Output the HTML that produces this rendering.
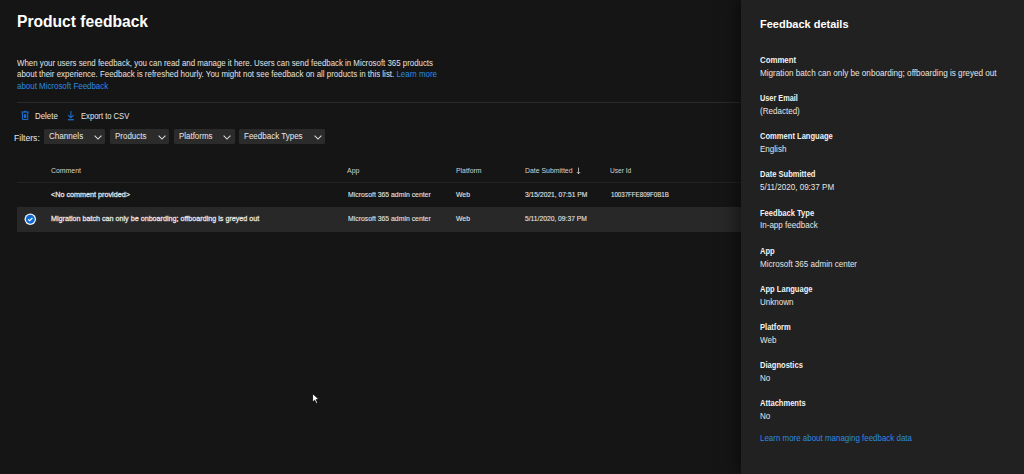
<!DOCTYPE html>
<html><head><meta charset="utf-8">
<style>
html,body{margin:0;padding:0;width:1024px;height:474px;overflow:hidden;background:#151515;font-family:"Liberation Sans",sans-serif;position:relative;}
.t{position:absolute;white-space:nowrap;line-height:1;transform-origin:0 0;}
.sep{position:absolute;height:1px;background:#2a2a2a;}
.dd{position:absolute;top:129.2px;height:14.7px;background:#2b2b2b;border-radius:1.5px;}
#panel{position:absolute;left:741px;top:0;width:283px;height:474px;background:#212121;box-shadow:-4px 0 16px rgba(0,0,0,0.5);}
</style></head>
<body>
<div class="sep" style="left:17px;top:102px;width:724px;"></div>
<div class="dd" style="left:44.2px;width:61.1px"><svg width="8" height="5" viewBox="0 0 8 5" style="position:absolute;right:3.5px;top:5.6px"><path d="M0.6 0.6L4 4l3.4-3.4" fill="none" stroke="#dcdcdc" stroke-width="1.05"/></svg></div><div class="dd" style="left:110px;width:59.4px"><svg width="8" height="5" viewBox="0 0 8 5" style="position:absolute;right:3.5px;top:5.6px"><path d="M0.6 0.6L4 4l3.4-3.4" fill="none" stroke="#dcdcdc" stroke-width="1.05"/></svg></div><div class="dd" style="left:174px;width:60.8px"><svg width="8" height="5" viewBox="0 0 8 5" style="position:absolute;right:3.5px;top:5.6px"><path d="M0.6 0.6L4 4l3.4-3.4" fill="none" stroke="#dcdcdc" stroke-width="1.05"/></svg></div><div class="dd" style="left:239.2px;width:86.3px"><svg width="8" height="5" viewBox="0 0 8 5" style="position:absolute;right:3.5px;top:5.6px"><path d="M0.6 0.6L4 4l3.4-3.4" fill="none" stroke="#dcdcdc" stroke-width="1.05"/></svg></div>
<div class="sep" style="left:17px;top:182px;width:724px;background:#232323"></div>
<div style="position:absolute;left:17px;top:207px;width:724px;height:24.5px;background:#282828;"></div>
<svg style="position:absolute;left:20px;top:109px" width="11" height="13" viewBox="0 0 11 13"><path d="M1.2 3.1H9" stroke="#1b6bcc" stroke-width="1.1"/><path d="M3.3 3a1.8 1.3 0 0 1 3.6 0z" fill="#1b6bcc"/><path d="M2.45 3.4V9.9Q2.45 10.5 3.05 10.5H7.15Q7.75 10.5 7.75 9.9V3.4" fill="none" stroke="#1b6bcc" stroke-width="1.1"/><rect x="3.9" y="5.3" width="2.4" height="3.7" fill="#1b6bcc"/></svg>
<svg style="position:absolute;left:67px;top:110px" width="8" height="11" viewBox="0 0 8 11"><path d="M3.9 0.9v6.9M1.1 5.1l2.8 2.6 2.8-2.6" fill="none" stroke="#1b6bcc" stroke-width="1.1"/><path d="M0.9 9.7h6" stroke="#1b6bcc" stroke-width="1.3"/></svg>
<svg style="position:absolute;left:575.5px;top:166.5px" width="5" height="8" viewBox="0 0 5 8"><path d="M2.5 0.6v6.2M0.8 5l1.7 1.8 1.7-1.8" fill="none" stroke="#d2d2d2" stroke-width="0.8"/></svg>
<svg style="position:absolute;left:24px;top:213px" width="13" height="13" viewBox="0 0 13 13"><circle cx="6.3" cy="6.2" r="5.75" fill="#f2f2f2"/><circle cx="6.3" cy="6.2" r="4.45" fill="#0c6ad2"/><path d="M4.1 6.3L5.6 7.7L8.4 5" fill="none" stroke="#fff" stroke-width="1.1"/></svg>
<svg style="position:absolute;left:312px;top:393px" width="9" height="12" viewBox="0 0 9 12"><path d="M0.6 0.6v8.6l2.1-2 1.4 3.2 1.5-0.7-1.4-3.1h2.9z" fill="#fff" stroke="#000" stroke-width="0.8"/></svg>
<div id="panel"></div>
<div class="t" style="left:17.00px;top:14.29px;font-size:15.6px;font-weight:700;color:#ffffff;transform:scaleX(1.0011);">Product feedback</div>
<div class="t" style="left:17.00px;top:59.05px;font-size:8.8px;font-weight:400;color:#e4e4e4;transform:scaleX(0.8945);">When your users send feedback, you can read and manage it here. Users can send feedback in Microsoft 365 products</div>
<div class="t" style="left:17.00px;top:70.35px;font-size:8.8px;font-weight:400;color:#e4e4e4;transform:scaleX(0.9016);">about their experience. Feedback is refreshed hourly. You might not see feedback on all products in this list. <span style="color:#2b8be0">Learn more</span></div>
<div class="t" style="left:17.00px;top:81.65px;font-size:8.8px;font-weight:400;color:#2b8be0;transform:scaleX(0.9010);">about Microsoft Feedback</div>
<div class="t" style="left:35.00px;top:112.05px;font-size:8.8px;font-weight:400;color:#e6e6e6;transform:scaleX(0.8963);">Delete</div>
<div class="t" style="left:80.70px;top:112.35px;font-size:8.8px;font-weight:400;color:#e6e6e6;transform:scaleX(0.8664);">Export to CSV</div>
<div class="t" style="left:14.30px;top:133.57px;font-size:8.9px;font-weight:400;color:#e6e6e6;transform:scaleX(0.9690);">Filters:</div>
<div class="t" style="left:48.90px;top:132.37px;font-size:8.9px;font-weight:400;color:#e8e8e8;transform:scaleX(0.9120);">Channels</div>
<div class="t" style="left:114.80px;top:132.37px;font-size:8.9px;font-weight:400;color:#e8e8e8;transform:scaleX(0.8963);">Products</div>
<div class="t" style="left:178.50px;top:132.37px;font-size:8.9px;font-weight:400;color:#e8e8e8;transform:scaleX(0.8937);">Platforms</div>
<div class="t" style="left:244.10px;top:132.37px;font-size:8.9px;font-weight:400;color:#e8e8e8;transform:scaleX(0.9020);">Feedback Types</div>
<div class="t" style="left:50.60px;top:166.63px;font-size:8.0px;font-weight:400;color:#d2d2d2;transform:scaleX(0.8649);">Comment</div>
<div class="t" style="left:347.40px;top:166.63px;font-size:8.0px;font-weight:400;color:#d2d2d2;transform:scaleX(0.8782);">App</div>
<div class="t" style="left:456.00px;top:166.63px;font-size:8.0px;font-weight:400;color:#d2d2d2;transform:scaleX(0.8575);">Platform</div>
<div class="t" style="left:524.70px;top:166.63px;font-size:8.0px;font-weight:400;color:#d2d2d2;transform:scaleX(0.8614);">Date Submitted</div>
<div class="t" style="left:610.00px;top:166.63px;font-size:8.0px;font-weight:400;color:#d2d2d2;transform:scaleX(0.8257);">User Id</div>
<div class="t" style="left:51.10px;top:190.57px;font-size:7.6px;font-weight:400;color:#e6e6e6;transform:scaleX(0.9488);-webkit-text-stroke:0.28px currentColor">&lt;No comment provided&gt;</div>
<div class="t" style="left:347.70px;top:190.57px;font-size:7.6px;font-weight:400;color:#e6e6e6;transform:scaleX(0.9029);-webkit-text-stroke:0.1px currentColor">Microsoft 365 admin center</div>
<div class="t" style="left:456.00px;top:190.57px;font-size:7.6px;font-weight:400;color:#e6e6e6;transform:scaleX(0.9041);-webkit-text-stroke:0.1px currentColor">Web</div>
<div class="t" style="left:524.70px;top:190.57px;font-size:7.6px;font-weight:400;color:#e6e6e6;transform:scaleX(0.8835);-webkit-text-stroke:0.1px currentColor">3/15/2021, 07:51 PM</div>
<div class="t" style="left:610.60px;top:190.57px;font-size:7.6px;font-weight:400;color:#e6e6e6;transform:scaleX(0.8102);-webkit-text-stroke:0.1px currentColor">10037FFE809F0B1B</div>
<div class="t" style="left:50.80px;top:215.07px;font-size:7.6px;font-weight:400;color:#e6e6e6;transform:scaleX(0.9440);-webkit-text-stroke:0.28px currentColor">Migration batch can only be onboarding; offboarding is greyed out</div>
<div class="t" style="left:347.70px;top:215.07px;font-size:7.6px;font-weight:400;color:#e6e6e6;transform:scaleX(0.9029);-webkit-text-stroke:0.1px currentColor">Microsoft 365 admin center</div>
<div class="t" style="left:456.00px;top:215.07px;font-size:7.6px;font-weight:400;color:#e6e6e6;transform:scaleX(0.9041);-webkit-text-stroke:0.1px currentColor">Web</div>
<div class="t" style="left:524.70px;top:215.07px;font-size:7.6px;font-weight:400;color:#e6e6e6;transform:scaleX(0.8846);-webkit-text-stroke:0.1px currentColor">5/11/2020, 09:37 PM</div>
<div class="t" style="left:759.70px;top:18.89px;font-size:11px;font-weight:700;color:#ffffff;transform:scaleX(0.9982);">Feedback details</div>
<div class="t" style="left:759.70px;top:56.12px;font-size:8.6px;font-weight:700;color:#f2f2f2;transform:scaleX(0.9107);">Comment</div>
<div class="t" style="left:759.70px;top:70.06px;font-size:8.2px;font-weight:400;color:#e6e6e6;transform:scaleX(0.9945);">Migration batch can only be onboarding; offboarding is greyed out</div>
<div class="t" style="left:759.70px;top:94.22px;font-size:8.6px;font-weight:700;color:#f2f2f2;transform:scaleX(0.8506);">User Email</div>
<div class="t" style="left:759.70px;top:108.16px;font-size:8.2px;font-weight:400;color:#e6e6e6;transform:scaleX(0.9826);">(Redacted)</div>
<div class="t" style="left:759.70px;top:132.32px;font-size:8.6px;font-weight:700;color:#f2f2f2;transform:scaleX(0.8813);">Comment Language</div>
<div class="t" style="left:759.70px;top:146.26px;font-size:8.2px;font-weight:400;color:#e6e6e6;transform:scaleX(0.9826);">English</div>
<div class="t" style="left:759.70px;top:170.42px;font-size:8.6px;font-weight:700;color:#f2f2f2;transform:scaleX(0.8801);">Date Submitted</div>
<div class="t" style="left:759.70px;top:184.36px;font-size:8.2px;font-weight:400;color:#e6e6e6;transform:scaleX(0.9826);">5/11/2020, 09:37 PM</div>
<div class="t" style="left:759.70px;top:208.52px;font-size:8.6px;font-weight:700;color:#f2f2f2;transform:scaleX(0.8801);">Feedback Type</div>
<div class="t" style="left:759.70px;top:222.46px;font-size:8.2px;font-weight:400;color:#e6e6e6;transform:scaleX(0.9826);">In-app feedback</div>
<div class="t" style="left:759.70px;top:246.62px;font-size:8.6px;font-weight:700;color:#f2f2f2;transform:scaleX(0.8801);">App</div>
<div class="t" style="left:759.70px;top:260.56px;font-size:8.2px;font-weight:400;color:#e6e6e6;transform:scaleX(0.9826);">Microsoft 365 admin center</div>
<div class="t" style="left:759.70px;top:284.72px;font-size:8.6px;font-weight:700;color:#f2f2f2;transform:scaleX(0.8801);">App Language</div>
<div class="t" style="left:759.70px;top:298.66px;font-size:8.2px;font-weight:400;color:#e6e6e6;transform:scaleX(0.9826);">Unknown</div>
<div class="t" style="left:759.70px;top:322.82px;font-size:8.6px;font-weight:700;color:#f2f2f2;transform:scaleX(0.8801);">Platform</div>
<div class="t" style="left:759.70px;top:336.76px;font-size:8.2px;font-weight:400;color:#e6e6e6;transform:scaleX(0.9826);">Web</div>
<div class="t" style="left:759.70px;top:360.92px;font-size:8.6px;font-weight:700;color:#f2f2f2;transform:scaleX(0.8801);">Diagnostics</div>
<div class="t" style="left:759.70px;top:374.86px;font-size:8.2px;font-weight:400;color:#e6e6e6;transform:scaleX(0.9826);">No</div>
<div class="t" style="left:759.70px;top:399.02px;font-size:8.6px;font-weight:700;color:#f2f2f2;transform:scaleX(0.8778);">Attachments</div>
<div class="t" style="left:759.70px;top:412.96px;font-size:8.2px;font-weight:400;color:#e6e6e6;transform:scaleX(0.9826);">No</div>
<div class="t" style="left:759.70px;top:434.56px;font-size:8.2px;font-weight:400;color:#2b8be0;transform:scaleX(0.9707);">Learn more about managing feedback data</div>
</body></html>
